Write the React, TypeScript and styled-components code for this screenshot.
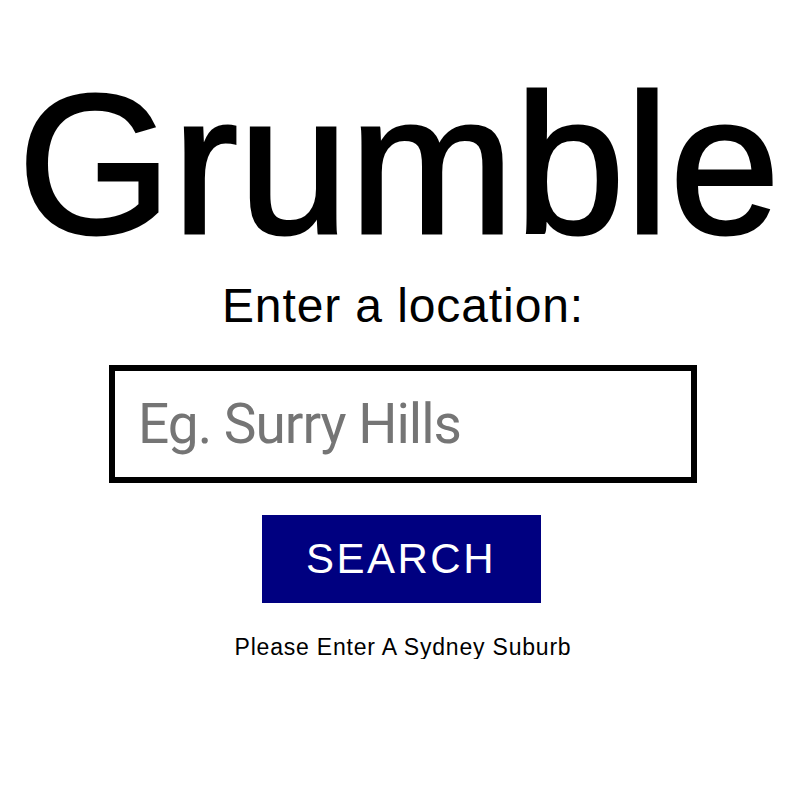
import React from "react";
import styled, { createGlobalStyle } from "styled-components";

const GlobalStyle = createGlobalStyle`
  html, body {
    margin: 0;
    padding: 0;
    background: #ffffff;
  }
  body {
    font-family: "Liberation Sans", Arial, sans-serif;
    color: #000000;
  }
`;

const Page = styled.main`
  display: flex;
  flex-direction: column;
  align-items: center;
  padding: 66px 0 0 6px;
`;

const Title = styled.h1`
  margin: 0 0 0 -8px;
  font-family: "Liberation Sans", Arial, sans-serif;
  font-weight: 400;
  font-size: 198px;
  line-height: 198px;
  letter-spacing: 0.5px;
  color: #000;
  -webkit-text-stroke: 3px #000;
`;

const Label = styled.label`
  margin-top: 18px;
  font-family: "Liberation Sans", Arial, sans-serif;
  font-size: 48px;
  line-height: 48px;
  letter-spacing: 0.9px;
  color: #000;
`;

const SearchForm = styled.form`
  display: flex;
  flex-direction: column;
  align-items: center;
  margin-top: 35px;
`;

const LocationInput = styled.input`
  box-sizing: border-box;
  width: 588px;
  height: 118px;
  margin: 0;
  padding: 0 0 0 23px;
  border: 6px solid #000;
  border-radius: 0;
  outline: none;
  background: #fff;
  font-family: Roboto, "Liberation Sans", sans-serif;
  font-size: 55px;
  letter-spacing: -1px;
  color: #000;

  &::placeholder {
    color: #757575;
    opacity: 1;
  }
`;

const SearchButton = styled.button`
  box-sizing: border-box;
  width: 279px;
  height: 88px;
  margin: 32px 0 0 -4px;
  padding: 0;
  border: none;
  border-radius: 0;
  background: #000080;
  color: #fff;
  font-family: "Liberation Sans", Arial, sans-serif;
  font-size: 42px;
  letter-spacing: 2.5px;
  cursor: pointer;
`;

const Hint = styled.p`
  margin: 33px 0 0;
  font-family: "Liberation Sans", Arial, sans-serif;
  font-size: 23px;
  line-height: 23px;
  letter-spacing: 0.8px;
  color: #000;
`;

export default function App() {
  return (
    <>
      <GlobalStyle />
      <Page>
        <Title>Grumble</Title>
        <Label htmlFor="location">Enter a location:</Label>
        <SearchForm onSubmit={(e) => e.preventDefault()}>
          <LocationInput id="location" type="text" placeholder="Eg. Surry Hills" />
          <SearchButton type="submit">SEARCH</SearchButton>
        </SearchForm>
        <Hint>Please Enter A Sydney Suburb</Hint>
      </Page>
    </>
  );
}
